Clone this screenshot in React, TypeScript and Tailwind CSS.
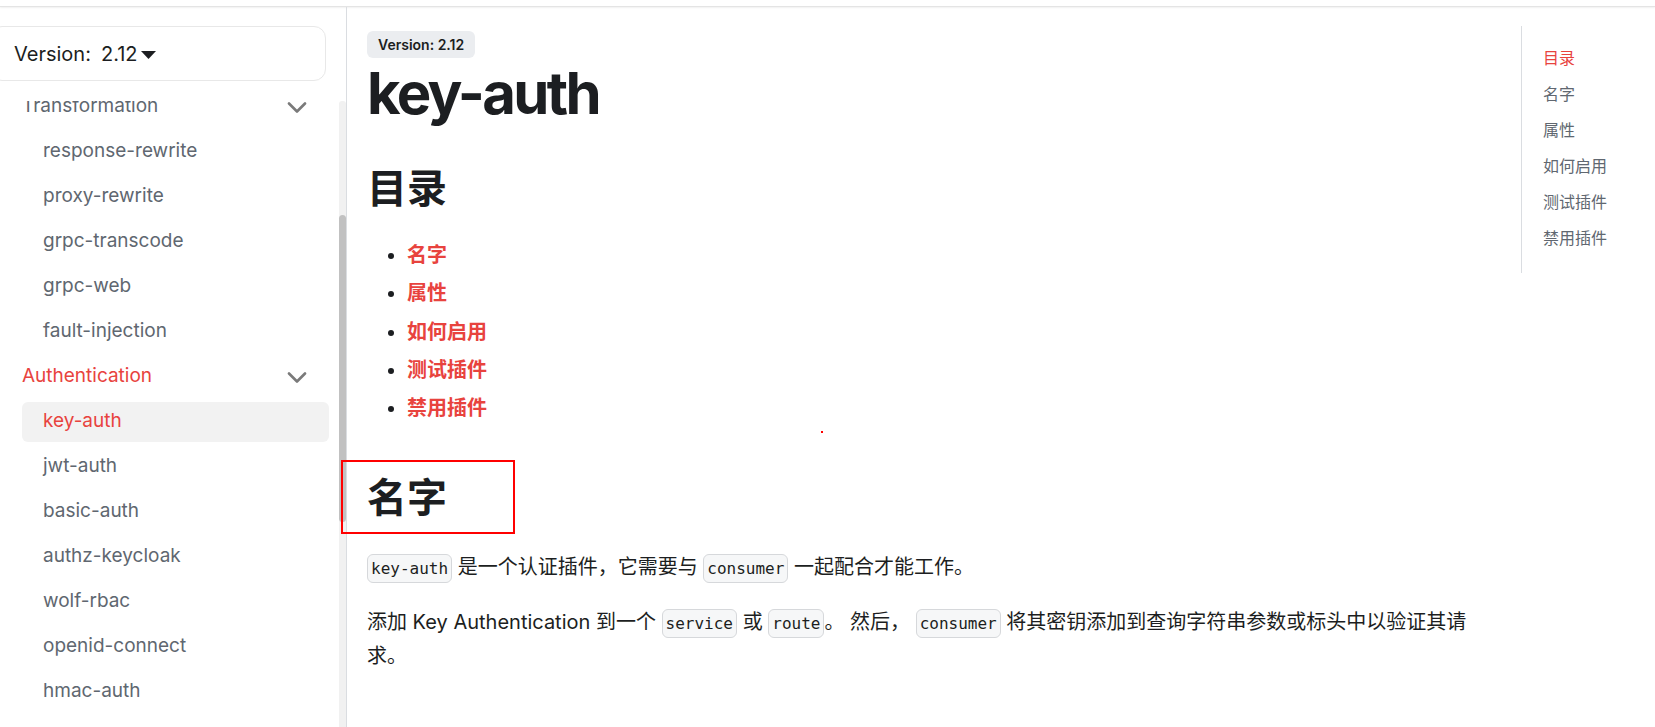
import React from "react";

const SANS = 'Inter, "Noto Sans CJK SC", "Noto Sans", sans-serif';
const MONO = '"DejaVu Sans Mono", "Liberation Mono", monospace';

function Chevron() {
  return (
    <svg width="20" height="11" viewBox="0 0 20 11" fill="none">
      <polyline points="2,1.5 10,9.5 18,1.5" stroke="#7a7a7a" strokeWidth="2.6" strokeLinecap="round" strokeLinejoin="round" />
    </svg>
  );
}

function Code({ children }: { children: React.ReactNode }) {
  return (
    <code
      className="inline-block rounded-[6px] border border-[#d6d8db] bg-[#f6f7f8] px-[3px] py-[3px] align-middle text-[16px] leading-[21px] text-[#1c1e21]"
      style={{ fontFamily: MONO }}
    >
      {children}
    </code>
  );
}

type Item = { label: string; kind: "cat" | "item"; active?: boolean };

const items: Item[] = [
  { label: "Transformation", kind: "cat" },
  { label: "response-rewrite", kind: "item" },
  { label: "proxy-rewrite", kind: "item" },
  { label: "grpc-transcode", kind: "item" },
  { label: "grpc-web", kind: "item" },
  { label: "fault-injection", kind: "item" },
  { label: "Authentication", kind: "cat", active: true },
  { label: "key-auth", kind: "item", active: true },
  { label: "jwt-auth", kind: "item" },
  { label: "basic-auth", kind: "item" },
  { label: "authz-keycloak", kind: "item" },
  { label: "wolf-rbac", kind: "item" },
  { label: "openid-connect", kind: "item" },
  { label: "hmac-auth", kind: "item" },
];

const tocLinks = ["名字", "属性", "如何启用", "测试插件", "禁用插件"];

export default function App() {
  return (
    <div
      className="relative h-[727px] w-full overflow-hidden bg-white text-[#1c1e21]"
      style={{ fontFamily: SANS }}
    >
      {/* top bar remnant */}
      <div className="h-[7px] border-b border-[#e4e4e4] shadow-[0_1px_2px_rgba(0,0,0,0.06)]" />

      <div className="flex h-[720px]">
        {/* Sidebar */}
        <aside className="flex w-[347px] shrink-0 flex-col border-r border-[#dadde1]">
          <div className="mt-[19px] ml-[-10px] flex h-[55px] w-[336px] items-center rounded-[12px] border border-[#e8e8e8] pl-[23px] text-[20px] text-[#1c1e21]">
            <span>Version:</span>
            <span className="ml-[10px]">2.12</span>
            <svg className="ml-[3px] mt-[2px]" width="15" height="8" viewBox="0 0 15 8">
              <polygon points="0,0 15,0 7.5,8" fill="#1c1e21" />
            </svg>
          </div>

          <div className="mt-[20px] flex min-h-0 flex-1">
            <div className="min-w-0 flex-1 overflow-hidden">
              <ul className="ml-[22px] mt-[-14px] flex w-[307px] flex-col gap-[5px]">
                {items.map((it) =>
                  it.kind === "cat" ? (
                    <li
                      key={it.label}
                      className={`flex h-[40px] items-center justify-between pr-[22px] text-[19px] ${
                        it.active ? "text-[#e8433e]" : "text-[#606770]"
                      }`}
                    >
                      <span className="pb-[1px]">{it.label}</span>
                      <Chevron />
                    </li>
                  ) : (
                    <li
                      key={it.label}
                      className={`flex h-[40px] items-center rounded-[6px] pb-[1px] pl-[21px] text-[19px] ${
                        it.active ? "bg-[#f2f2f2] text-[#e8433e]" : "text-[#606770]"
                      }`}
                    >
                      {it.label}
                    </li>
                  )
                )}
              </ul>
            </div>
            <div className="w-[7px] shrink-0 rounded-t-[3px] bg-[#f1f1f1] pt-[114px]">
              <div className="h-[307px] rounded-full bg-[#c1c1c1]" />
            </div>
          </div>
        </aside>

        {/* Main */}
        <main className="w-[1174px] shrink-0 pl-[20px]">
          <div className="w-[1108px]">
            <span className="mt-[24px] inline-block h-[27px] rounded-[6px] bg-[#ebedf0] px-[11px] text-[14px] font-semibold leading-[27px] text-[#1c1e21]">
              Version: 2.12
            </span>
            <h1 className="mt-[-1px] text-[58px] font-bold leading-[72px] tracking-[-0.045em] text-[#1c1e21]">
              key-auth
            </h1>
            <h2 className="mt-[35px] text-[40px] font-bold leading-[50px] text-[#1c1e21]">目录</h2>
            <ul className="mt-[25px] list-disc pl-[40px] text-[20px] leading-[33.25px] marker:text-[#1c1e21]">
              {tocLinks.map((t) => (
                <li key={t} className="mt-[5px] font-bold text-[#e8433e]">
                  {t}
                </li>
              ))}
            </ul>
            <h2 className="mt-[48px] text-[40px] font-bold leading-[50px] text-[#1c1e21]">名字</h2>
            <p className="mt-[27px] text-[20px] leading-[34px]">
              <Code>key-auth</Code> 是一个认证插件，它需要与 <Code>consumer</Code> 一起配合才能工作。
            </p>
            <p className="mt-[22px] text-[20px] leading-[33.5px]">
              添加 Key Authentication 到一个 <Code>service</Code> 或 <Code>route</Code>。 然后，{" "}
              <Code>consumer</Code> 将其密钥添加到查询字符串参数或标头中以验证其请求。
            </p>
          </div>
        </main>

        {/* TOC */}
        <nav className="mt-[19px] h-[247px] flex-1 border-l border-[#dadde1] pl-[21px] pt-[14px]">
          <ul className="text-[16px] leading-[36px]">
            <li className="text-[#e8433e]">目录</li>
            {tocLinks.map((t) => (
              <li key={t} className="text-[#606770]">
                {t}
              </li>
            ))}
          </ul>
        </nav>
      </div>

      {/* annotation overlays */}
      <div className="pointer-events-none absolute left-[341px] top-[460px] h-[74px] w-[174px] border-2 border-[#ff0000]" />
      <div className="pointer-events-none absolute left-[821px] top-[431px] h-[2px] w-[2px] bg-[#ff0000]" />
    </div>
  );
}
